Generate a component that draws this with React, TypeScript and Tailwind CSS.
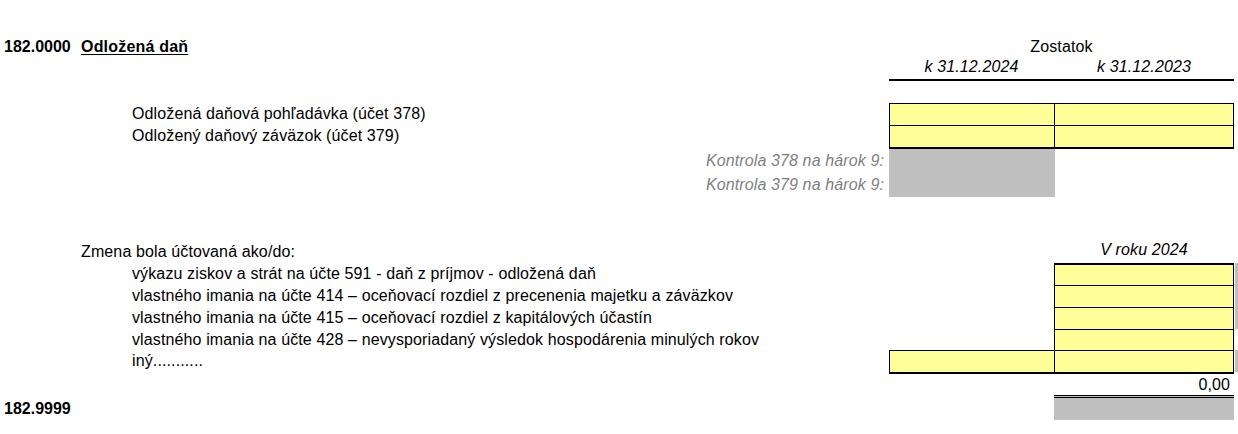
export default function App() {
  const yellow = "shrink-0 bg-[#ffff99] border-black";
  const changes = [
    "výkazu ziskov a strát na účte 591 - daň z príjmov - odložená daň",
    "vlastného imania na účte 414 – oceňovací rozdiel z precenenia majetku a záväzkov",
    "vlastného imania na účte 415 – oceňovací rozdiel z kapitálových účastín",
  ];

  return (
    <div className="w-[1238px] h-[434px] bg-white text-black text-[16px] leading-none tracking-[0.12px] font-['Liberation_Sans',Arial,sans-serif] overflow-hidden pt-[36px]">
      {/* nadpis */}
      <div className="flex h-[22px] items-center">
        <div className="w-[889px] shrink-0 flex items-center font-bold tracking-normal">
          <span className="w-[81px] pl-[4px]">182.0000</span>
          <span className="underline underline-offset-2 tracking-[0.2px]">Odložená daň</span>
        </div>
        <div className="w-[345px] shrink-0 text-center">Zostatok</div>
      </div>
      <div className="flex h-[23px]">
        <div className="w-[889px] shrink-0" />
        <div className="w-[345px] shrink-0 flex border-b-2 border-black italic items-center pb-[3px]">
          <div className="w-[165px] text-center">k 31.12.2024</div>
          <div className="w-[180px] text-center">k 31.12.2023</div>
        </div>
      </div>
      <div className="h-[22px]" />

      {/* účty 378 / 379 */}
      <div className="flex h-[22px]">
        <div className="w-[889px] shrink-0 pl-[132px] flex items-center">Odložená daňová pohľadávka (účet 378)</div>
        <div className={`w-[165px] border-l border-t ${yellow}`} />
        <div className={`w-[180px] border-l border-r border-t ${yellow}`} />
      </div>
      <div className="flex h-[24px]">
        <div className="w-[889px] shrink-0 pl-[132px] flex items-center pb-[3px]">Odložený daňový záväzok (účet 379)</div>
        <div className={`w-[165px] border-l border-t border-b-2 ${yellow}`} />
        <div className={`w-[180px] border-l border-r border-t border-b-2 ${yellow}`} />
      </div>
      {["Kontrola 378 na hárok 9:", "Kontrola 379 na hárok 9:"].map((t) => (
        <div key={t} className="flex h-[24px]">
          <div className="w-[889px] shrink-0 pr-[5px] flex items-center justify-end italic text-[#808080]">{t}</div>
          <div className="w-[166px] shrink-0 bg-[#c0c0c0]" />
        </div>
      ))}
      <div className="h-[44px]" />

      {/* zmena */}
      <div className="flex h-[22px]">
        <div className="w-[1054px] shrink-0 pl-[81px] flex items-center">Zmena bola účtovaná ako/do:</div>
        <div className="w-[180px] shrink-0 flex items-center justify-center italic pb-[5px]">V roku 2024</div>
      </div>
      {changes.map((t, i) => (
        <div key={t} className="flex h-[22px]">
          <div className="w-[1054px] shrink-0 pl-[132px] flex items-center">{t}</div>
          <div className={`w-[180px] border-l border-r border-t ${i === 0 ? "border-t-2" : ""} ${yellow}`} />
          <div className="w-[4px] shrink-0 ml-[1px] bg-[#c0c0c0]" />
        </div>
      ))}
      <div className="flex h-[21px]">
        <div className="w-[1054px] shrink-0 pl-[132px] flex items-center">
          vlastného imania na účte 428 – nevysporiadaný výsledok hospodárenia minulých rokov
        </div>
        <div className={`w-[180px] border-l border-r border-t ${yellow}`} />
      </div>
      <div className="flex h-[24px]">
        <div className="w-[889px] shrink-0 pl-[132px] flex items-center pb-[3px]">iný...........</div>
        <div className={`w-[165px] border-l border-t border-b-2 ${yellow}`} />
        <div className={`w-[180px] border-l border-r border-t border-b-2 ${yellow}`} />
        <div className="w-[4px] shrink-0 ml-[1px] h-[22px] bg-[#c0c0c0]" />
      </div>

      {/* súčet */}
      <div className="flex h-[21px]">
        <div className="w-[1054px] shrink-0" />
        <div className="w-[180px] shrink-0 pr-[4px] flex items-center justify-end">0,00</div>
      </div>
      <div className="flex h-[25px]">
        <div className="w-[1054px] shrink-0 pl-[4px] pt-[3px] flex items-center font-bold tracking-normal">182.9999</div>
        <div className="w-[180px] shrink-0 border-t-[3px] border-double border-black bg-[#c0c0c0]" />
      </div>
    </div>
  );
}
